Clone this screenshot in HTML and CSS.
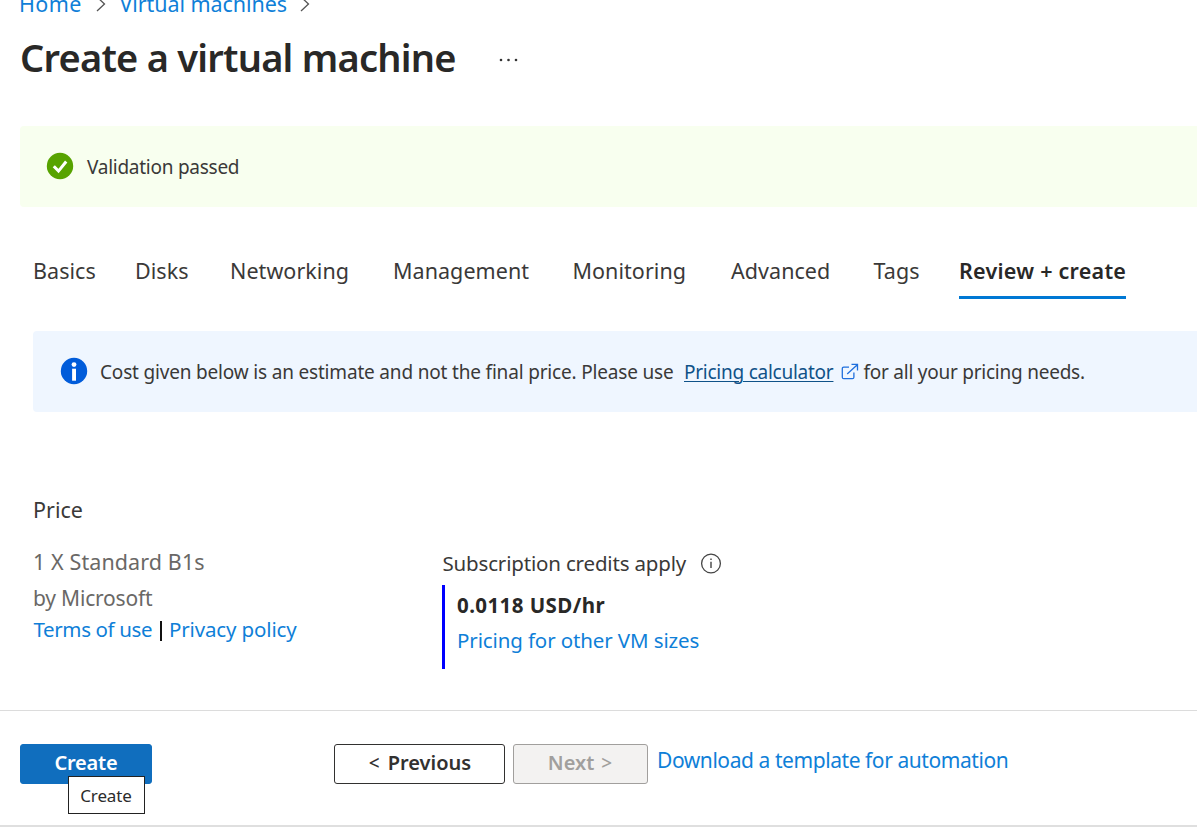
FILE: index.html
```
<!DOCTYPE html>
<html lang="en">
<head>
<meta charset="utf-8">
<title>Create a virtual machine</title>
<link rel="stylesheet" href="styles.css">
</head>
<body>
<div class="page">
  <nav class="breadcrumb">
    <a class="crumb crumb-home">Home</a>
    <svg class="chevron" width="10" height="16" viewBox="0 0 10 16"><path d="M1 1l7.5 7L1 15"/></svg>
    <a class="crumb crumb-vm">Virtual machines</a>
    <svg class="chevron" width="10" height="16" viewBox="0 0 10 16"><path d="M1 1l7.5 7L1 15"/></svg>
  </nav>

  <header class="title-row">
    <h1 class="title">Create a virtual machine</h1>
    <svg class="more" width="20" height="4" viewBox="0 0 20 4"><circle cx="2" cy="2" r="1.3"/><circle cx="9.5" cy="2" r="1.3"/><circle cx="17" cy="2" r="1.3"/></svg>
  </header>

  <div class="banner banner-success">
    <svg class="status" width="28" height="28" viewBox="0 0 28 28"><circle cx="14" cy="14" r="13.2" fill="#57a300"/><path d="M7.8 14.3l4.7 4.8 7.7-9.6" fill="none" stroke="#fff" stroke-width="3"/></svg>
    <span class="validation">Validation passed</span>
  </div>

  <nav class="tabs">
    <a class="tab">Basics</a>
    <a class="tab">Disks</a>
    <a class="tab">Networking</a>
    <a class="tab">Management</a>
    <a class="tab">Monitoring</a>
    <a class="tab">Advanced</a>
    <a class="tab">Tags</a>
    <a class="tab tab-active">Review + create</a>
  </nav>

  <div class="banner banner-info">
    <svg class="status" width="28" height="28" viewBox="0 0 28 28"><circle cx="14" cy="14" r="13.2" fill="#015cda"/><circle cx="14" cy="7.6" r="2.4" fill="#fff"/><rect x="12.1" y="11.7" width="3.9" height="12" fill="#fff"/></svg>
    <span class="cost">Cost given below is an estimate and not the final price. Please use</span>
    <a class="calculator">Pricing calculator</a>
    <svg class="external" width="18" height="18" viewBox="0 0 18 18"><path d="M8 4.2H2.8q-1.5 0-1.5 1.5v8.5q0 1.5 1.5 1.5h8.6q1.5 0 1.5-1.5V9.5M6.2 11L16.3 1.8M10.5 1.4h6v6"/></svg>
    <span class="needs">for all your pricing needs.</span>
  </div>

  <main class="pricing">
    <section class="product">
      <h2 class="price-heading">Price</h2>
      <p class="sku">1 X Standard B1s</p>
      <p class="publisher">by Microsoft</p>
      <p class="legal"><a class="terms">Terms of use</a><span class="divider"></span><a class="privacy">Privacy policy</a></p>
    </section>
    <section class="rate">
      <div class="credits"><span>Subscription credits apply</span>
        <svg width="22" height="22" viewBox="0 0 22 22"><circle cx="11" cy="11.5" r="9.4" fill="none" stroke="#444" stroke-width="1.3"/><path d="M11 9.8v6.1M11 6.5v1.6" stroke="#444" stroke-width="1.4"/></svg>
      </div>
      <div class="rate-box">
        <strong class="amount">0.0118 USD/hr</strong>
        <a class="sizes">Pricing for other VM sizes</a>
      </div>
    </section>
  </main>

  <footer class="footer">
    <button class="btn btn-primary">Create</button>
    <button class="btn btn-prev"><span class="prev-arrow">&lt;</span><span>Previous</span></button>
    <button class="btn btn-next" disabled>Next <span class="next-arrow">&gt;</span></button>
    <a class="download">Download a template for automation</a>
    <div class="tooltip">Create</div>
  </footer>
</div>
</body>
</html>
```
FILE: styles.css
```
* { box-sizing: border-box; margin: 0; padding: 0; }

body {
  background: #fff;
  color: #3a3938;
  font-family: "Noto Sans", "Open Sans", sans-serif;
}

.page {
  display: flex;
  flex-direction: column;
  width: 1197px;
  height: 827px;
  overflow: hidden;
  white-space: nowrap;
}

a { color: #0f7fd8; text-decoration: none; }

/* Breadcrumb, partly scrolled off the top */
.breadcrumb {
  display: flex;
  align-items: center;
  height: 30px;
  margin-top: -11px;
  padding-left: 19px;
  font-size: 21.5px;
  line-height: 30px;
}
.crumb-home { width: 76.5px; letter-spacing: .4px; }
.crumb-vm { width: 180.5px; margin-left: 14px; letter-spacing: -.07px; }
.chevron { fill: none; stroke: #555; stroke-width: 1.3; }

.title-row {
  display: flex;
  align-items: center;
  height: 60px;
  margin-top: 8px;
  padding-left: 20px;
}
.title {
  width: 479px;
  color: #292827;
  font-size: 38px;
  font-weight: 600;
  line-height: 60px;
  letter-spacing: -.76px;
}
.more { margin-top: 5px; fill: #333; }

.banner {
  display: flex;
  align-items: center;
  font-size: 19px;
  line-height: 30px;
  border-radius: 4px 0 0 4px;
}
.status { margin-top: -1px; }
.banner-success {
  height: 81px;
  margin: 39px 0 0 20px;
  padding-left: 26px;
  background: #f8ffef;
}
.validation { margin-left: 13px; letter-spacing: -.26px; }

.tabs {
  display: grid;
  grid-template-columns: 102px 95px 163px 179.5px 158.5px 142.5px 85.5px 167px;
  height: 44px;
  margin: 48px 0 0 33px;
  font-size: 21.5px;
  line-height: 32px;
  letter-spacing: .05px;
}
.tab { color: #3a3938; }
.tab-active {
  color: #292827;
  font-weight: 600;
  letter-spacing: .25px;
  border-bottom: 3px solid #0078d4;
}

.banner-info {
  height: 81px;
  margin: 32px 0 0 33px;
  padding-left: 27px;
  background: #eff6ff;
}
.cost { width: 584px; margin-left: 12px; letter-spacing: -.18px; }
.calculator {
  color: #0f5288;
  letter-spacing: -.25px;
  text-decoration: underline;
  text-decoration-thickness: 1px;
  text-underline-offset: 2px;
}
.external { margin-left: 8px; fill: none; stroke: #1f6fdd; stroke-width: 1.3; }
.needs { margin-left: 4px; letter-spacing: -.24px; }

.pricing {
  display: flex;
  height: 298px;
  padding: 82px 0 0 33px;
}
.product { width: 409px; }
.price-heading {
  font-size: 21.5px;
  font-weight: 400;
  line-height: 32px;
}
.sku {
  margin-top: 20px;
  color: #6a6866;
  font-size: 21.5px;
  line-height: 32px;
  letter-spacing: .1px;
}
.publisher {
  margin-top: 4px;
  color: #6a6866;
  font-size: 21px;
  line-height: 32px;
  letter-spacing: -.2px;
}
.legal {
  display: flex;
  align-items: center;
  margin-top: -1px;
  padding-left: .5px;
  font-size: 20.5px;
  line-height: 32px;
}
.terms { width: 126px; letter-spacing: -.38px; }
.divider { width: 2px; height: 20px; margin-top: 3px; background: #111; }
.privacy { margin-left: 7.5px; letter-spacing: -.14px; }

.rate { padding-top: 53px; }
.credits {
  display: flex;
  align-items: center;
  gap: 14px;
  padding-left: .5px;
  font-size: 20.5px;
  line-height: 32px;
  letter-spacing: -.17px;
}
.rate-box {
  display: flex;
  flex-direction: column;
  height: 84px;
  margin-top: 6px;
  padding-left: 12px;
  border-left: 3px solid #00f;
}
.amount {
  color: #292827;
  font-size: 20.5px;
  line-height: 40px;
  letter-spacing: .42px;
}
.sizes {
  font-size: 20.5px;
  line-height: 30px;
  letter-spacing: -.12px;
}

.footer {
  position: relative;
  display: flex;
  height: 117px;
  padding: 33px 0 0 20px;
  border-top: 1px solid #dcdcdc;
  border-bottom: 2px solid #dfdfdf;
}
.btn {
  display: flex;
  justify-content: center;
  height: 40px;
  border: 1px solid;
  border-radius: 3px;
  font: 600 20px/36px "Noto Sans", "Open Sans", sans-serif;
}
.btn-primary { width: 132px; color: #fff; background: #106ebe; border-color: #106ebe; letter-spacing: -.2px; }
.btn-prev {
  width: 171px;
  margin-left: 182px;
  padding-left: 1px;
  gap: 8px;
  color: #323130;
  background: #fff;
  border-color: #323130;
}
.btn-next {
  width: 135px;
  margin-left: 8px;
  padding-right: 1px;
  gap: 7px;
  color: #a19f9d;
  background: #f3f2f1;
  border-color: #a19f9d;
}
.prev-arrow, .next-arrow { font-size: 19px; font-weight: 500; }
.download {
  margin-left: 9px;
  font-size: 21px;
  line-height: 32px;
  letter-spacing: -.43px;
}
.tooltip {
  position: absolute;
  left: 68px;
  top: 65px;
  width: 77px;
  height: 38px;
  padding-right: 1px;
  border: 1px solid #222;
  background: #fff;
  color: #2b2b2b;
  font-size: 17px;
  line-height: 38px;
  letter-spacing: -.1px;
  text-align: center;
}
```
